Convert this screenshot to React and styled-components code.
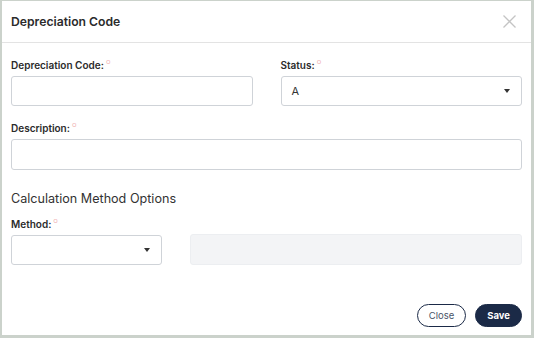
import React from "react";
import styled, { createGlobalStyle } from "styled-components";

const Global = createGlobalStyle`
  html, body { margin: 0; padding: 0; background: #cbd2cb; }
  body { font-family: Inter, "Noto Sans", sans-serif; }
  * { box-sizing: border-box; }
`;

const Frame = styled.div`
  width: 534px;
  height: 338px;
  padding: 1px 3px 3px 2px;
  background: #cbd2cb;
`;

const Modal = styled.div`
  width: 100%;
  height: 100%;
  background: #fff;
  display: flex;
  flex-direction: column;
`;

const Header = styled.div`
  height: 42px;
  display: flex;
  align-items: center;
  justify-content: space-between;
  padding: 0 14px 0 9px;
  border-bottom: 1px solid #e3e3e3;
`;

const Title = styled.h1`
  margin: 0;
  font-size: 12.2px;
  font-weight: 600;
  color: #2b2b2b;
`;

const CloseX = styled.button`
  border: 0;
  background: none;
  padding: 0;
  width: 14px;
  height: 14px;
  display: flex;
  cursor: pointer;
`;

const Body = styled.div`
  flex: 1;
  padding: 17px 9px 0 9px;
  display: flex;
  flex-direction: column;
`;

const Row = styled.div`
  display: grid;
  grid-template-columns: ${(p) => p.$cols || "1fr 1fr"};
  column-gap: ${(p) => p.$gap || "28px"};
  margin-bottom: ${(p) => p.$mb || "0"};
  align-items: end;
`;

const Field = styled.div`
  display: flex;
  flex-direction: column;
`;

const Label = styled.label`
  font-size: 10px;
  font-weight: 600;
  color: #2b2b2b;
  margin-bottom: 5px;
  line-height: 11px;
  display: flex;
  align-items: flex-start;
`;

const Req = styled.span`
  font-size: 5px;
  color: #f0b0b0;
  margin-left: 2px;
  line-height: 5px;
`;

const Input = styled.div`
  height: ${(p) => p.$h || "30px"};
  border: 1px solid #cfd3d8;
  border-radius: 3px;
  background: ${(p) => (p.$disabled ? "#f3f4f6" : "#fff")};
  border-color: ${(p) => (p.$disabled ? "#eceef1" : "#cfd3d8")};
  display: flex;
  align-items: center;
  justify-content: space-between;
  padding: 0 11px 0 10px;
  font-size: 11px;
  color: #333;
`;

const Caret = styled.span`
  width: 0;
  height: 0;
  border-left: 3.5px solid transparent;
  border-right: 3.5px solid transparent;
  border-top: 4px solid #333;
`;

const Section = styled.div`
  font-size: 12.6px;
  color: #333;
  font-weight: 400;
  margin: 0 0 13px 0;
`;

const Footer = styled.div`
  display: flex;
  justify-content: flex-end;
  gap: 9px;
  padding: 0 9px 8px 0;
`;

const Btn = styled.button`
  height: 23px;
  padding: 0 11px;
  border-radius: 12px;
  font-family: Inter, sans-serif;
  font-size: 9.5px;
  font-weight: ${(p) => (p.$primary ? 700 : 400)};
  background: ${(p) => (p.$primary ? "#1b2a47" : "#fff")};
  color: ${(p) => (p.$primary ? "#fff" : "#4a5568")};
  border: 1px solid #1b2a47;
  cursor: pointer;
`;

export default function App() {
  return (
    <Frame>
      <Global />
      <Modal>
        <Header>
          <Title>Depreciation Code</Title>
          <CloseX aria-label="close">
            <svg width="13" height="13" viewBox="0 0 13 13">
              <path d="M0.5 0.5L12.5 12.5M12.5 0.5L0.5 12.5" stroke="#c4c4c4" strokeWidth="1.3" />
            </svg>
          </CloseX>
        </Header>
        <Body>
          <Row $mb="17px">
            <Field>
              <Label>Depreciation Code:<Req>○</Req></Label>
              <Input />
            </Field>
            <Field>
              <Label>Status:<Req>○</Req></Label>
              <Input>
                A
                <Caret />
              </Input>
            </Field>
          </Row>
          <Row $cols="1fr" $mb="21px">
            <Field>
              <Label>Description:<Req>○</Req></Label>
              <Input $h="31px" />
            </Field>
          </Row>
          <Section>Calculation Method Options</Section>
          <Row $cols="151px 1fr" $gap="28px">
            <Field>
              <Label>Method:<Req>○</Req></Label>
              <Input>
                <span />
                <Caret />
              </Input>
            </Field>
            <Input $disabled $h="31px" />
          </Row>
        </Body>
        <Footer>
          <Btn>Close</Btn>
          <Btn $primary>Save</Btn>
        </Footer>
      </Modal>
    </Frame>
  );
}
